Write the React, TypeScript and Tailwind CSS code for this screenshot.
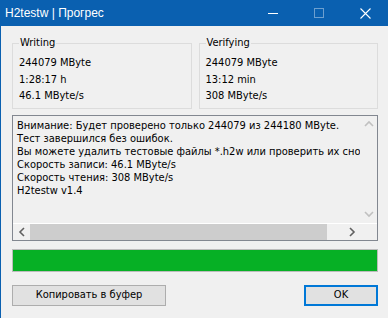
import type { ReactNode } from 'react';

const writing = ['244079 MByte', '1:28:17 h', '46.1 MByte/s'];
const verifying = ['244079 MByte', '13:12 min', '308 MByte/s'];

const log = [
  'Внимание: Будет проверено только 244079 из 244180 MByte.',
  'Тест завершился без ошибок.',
  'Вы можете удалить тестовые файлы *.h2w или проверить их снова',
  'Скорость записи: 46.1 MByte/s',
  'Скорость чтения: 308 MByte/s',
  'H2testw v1.4',
];

function GroupBox({ title, lines }: { title: string; lines: string[] }) {
  return (
    <fieldset className="flex-1 min-w-0 border border-[#dcdcdc] px-[6px] pt-[5px] pb-[3px]">
      <legend className="px-[1px] leading-[14px]">{title}</legend>
      {lines.map((l) => (
        <div key={l} className="leading-[16.5px]">
          {l}
        </div>
      ))}
    </fieldset>
  );
}

function Chevron({ dir, color }: { dir: 'up' | 'down' | 'left' | 'right'; color: string }) {
  const pts = {
    up: '1,6 5,2 9,6',
    down: '1,2 5,6 9,2',
    left: '6,1 2,5 6,9',
    right: '2,1 6,5 2,9',
  }[dir];
  const vertical = dir === 'up' || dir === 'down';
  return (
    <svg width={vertical ? 10 : 8} height={vertical ? 8 : 10} viewBox={vertical ? '0 0 10 8' : '0 0 8 10'}>
      <polyline points={pts} fill="none" stroke={color} strokeWidth="1.6" />
    </svg>
  );
}

function Button({ children, primary }: { children: ReactNode; primary?: boolean }) {
  return (
    <div
      className={
        primary
          ? 'w-[74px] h-[21px] flex items-center justify-center border-2 border-[#0078d7] bg-[#e1e1e1]'
          : 'w-[154px] h-[21px] flex items-center justify-center border border-[#adadad] bg-[#e1e1e1]'
      }
    >
      {children}
    </div>
  );
}

export default function App() {
  return (
    <div className="w-[388px] h-[318px] overflow-hidden flex flex-col bg-[#f0f0f0] border-l border-[#0a60b0] text-[11px] text-black font-['DejaVu_Sans_Condensed','DejaVu_Sans',sans-serif] [font-stretch:semi-condensed]">
      {/* title bar */}
      <div className="h-[26px] flex items-center bg-[#0a60b0] text-white shrink-0">
        <div className="flex-1 pl-[4px] text-[12px] [font-stretch:normal] font-['Liberation_Sans',Arial,sans-serif]">
          H2testw | Прогрес
        </div>
        <div className="w-[46px] h-full flex items-center justify-center">
          <div className="w-[10px] h-[1px] bg-white" />
        </div>
        <div className="w-[46px] h-full flex items-center justify-center">
          <div className="w-[10px] h-[10px] border border-white/40" />
        </div>
        <div className="w-[46px] h-full flex items-center justify-center">
          <svg width="11" height="11" viewBox="0 0 11 11">
            <path d="M0.5 0.5 L10.5 10.5 M10.5 0.5 L0.5 10.5" stroke="white" strokeWidth="1.1" />
          </svg>
        </div>
      </div>

      <div className="flex-1 flex flex-col pl-[11px] pr-[10px] pt-[10px]">
        <div className="flex gap-[7px]">
          <GroupBox title="Writing" lines={writing} />
          <GroupBox title="Verifying" lines={verifying} />
        </div>

        {/* log */}
        <div className="mt-[6px] h-[126px] flex flex-col border border-[#828790]">
          <div className="flex-1 min-h-0 flex">
            <div className="flex-1 min-w-0 overflow-hidden whitespace-nowrap pl-[4px] pt-[3px] leading-[13px]">
              {log.map((l) => (
                <div key={l}>{l}</div>
              ))}
            </div>
            <div className="w-[17px] flex flex-col justify-between items-center">
              <div className="h-[17px] flex items-center justify-center">
                <Chevron dir="up" color="#c0c0c0" />
              </div>
              <div className="h-[17px] flex items-center justify-center">
                <Chevron dir="down" color="#c0c0c0" />
              </div>
            </div>
          </div>
          <div className="h-[17px] flex border-t border-white">
            <div className="w-[17px] flex items-center justify-center">
              <Chevron dir="left" color="#606060" />
            </div>
            <div className="flex-1 flex items-stretch">
              <div className="w-[297px] bg-[#cdcdcd]" />
            </div>
            <div className="w-[17px] flex items-center justify-center">
              <Chevron dir="right" color="#606060" />
            </div>
            <div className="w-[17px]" />
          </div>
        </div>

        {/* progress */}
        <div className="mt-[8px] h-[23px] border border-[#bcbcbc] bg-[#06b025]" />

        <div className="mt-[13px] flex justify-between">
          <Button>Копировать в буфер</Button>
          <Button primary>OK</Button>
        </div>
      </div>
    </div>
  );
}
